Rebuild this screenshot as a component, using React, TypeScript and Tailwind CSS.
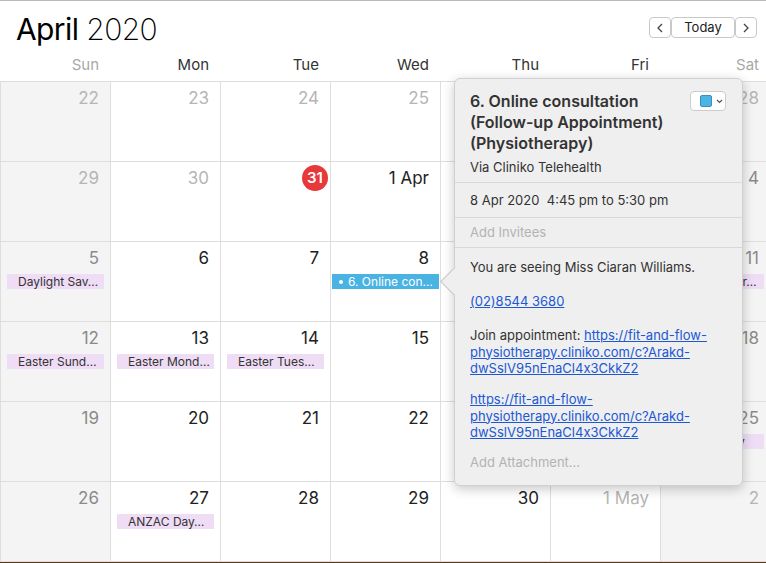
import React from 'react'

type Tone = 'muted' | 'weekend' | 'normal' | 'today' | 'hidden'
type Ev = { text: string; kind: 'holiday' | 'appt' }
type Day = { label: string; tone: Tone; event?: Ev }

const dayNames = ['Sun', 'Mon', 'Tue', 'Wed', 'Thu', 'Fri', 'Sat']

const d = (label: string, tone: Tone, event?: Ev): Day => ({ label, tone, event })

// cells under the popover keep no visible label
const weeks: Day[][] = [
  [d('22', 'muted'), d('23', 'muted'), d('24', 'muted'), d('25', 'muted'), d('', 'hidden'), d('', 'hidden'), d('28', 'muted')],
  [d('29', 'muted'), d('30', 'muted'), d('31', 'today'), d('1 Apr', 'normal'), d('', 'hidden'), d('', 'hidden'), d('4', 'weekend')],
  [
    d('5', 'weekend', { text: 'Daylight Sav…', kind: 'holiday' }),
    d('6', 'normal'),
    d('7', 'normal'),
    d('8', 'normal', { text: '6. Online con…', kind: 'appt' }),
    d('', 'hidden'),
    d('', 'hidden'),
    d('11', 'weekend', { text: 'Easter Satur…', kind: 'holiday' }),
  ],
  [
    d('12', 'weekend', { text: 'Easter Sund…', kind: 'holiday' }),
    d('13', 'normal', { text: 'Easter Mond…', kind: 'holiday' }),
    d('14', 'normal', { text: 'Easter Tues…', kind: 'holiday' }),
    d('15', 'normal'),
    d('', 'hidden'),
    d('', 'hidden'),
    d('18', 'weekend'),
  ],
  [
    d('19', 'weekend'),
    d('20', 'normal'),
    d('21', 'normal'),
    d('22', 'normal'),
    d('', 'hidden'),
    d('', 'hidden'),
    d('25', 'weekend', { text: 'ANZAC Day', kind: 'holiday' }),
  ],
  [
    d('26', 'weekend'),
    d('27', 'normal', { text: 'ANZAC Day…', kind: 'holiday' }),
    d('28', 'normal'),
    d('29', 'normal'),
    d('30', 'normal'),
    d('1 May', 'muted'),
    d('2', 'muted'),
  ],
]

const toneClass: Record<Tone, string> = {
  muted: 'text-[#b5b5b5]',
  weekend: 'text-[#8a8a8a]',
  normal: 'text-[#222]',
  today: 'text-white',
  hidden: 'text-transparent',
}

function Cell({ day, col }: { day: Day; col: number }) {
  const weekend = col === 0 || col === 6
  return (
    <div className={`h-[80px] border-t border-l border-[#dedede] flex flex-col pt-[5px] ${weekend ? 'bg-[#f4f4f4]' : 'bg-white'}`}>
      {day.tone === 'today' ? (
        <div className="flex justify-end pr-[2px] h-[22px]">
          <div className="w-[26px] h-[26px] -mt-[2px] rounded-full bg-[#e8393a] flex items-center justify-center text-white text-[15px] font-semibold">
            {day.label}
          </div>
        </div>
      ) : (
        <div className={`text-right pr-[11px] text-[17px] leading-[22px] h-[22px] ${toneClass[day.tone]}`}>{day.label}</div>
      )}
      {day.event && day.event.kind === 'holiday' && (
        <div className="mt-[5px] ml-[6px] w-[97px] h-[15px] bg-[#efdcf5] text-[12px] leading-[15px] text-[#333] pl-[11px] whitespace-nowrap overflow-hidden">
          {day.event.text}
        </div>
      )}
      {day.event && day.event.kind === 'appt' && (
        <div className="mt-[5px] ml-[1px] w-[107px] h-[15px] bg-[#49b3e3] text-[12px] leading-[15px] text-white pl-[7px] whitespace-nowrap overflow-hidden flex items-center">
          <span className="w-[4px] h-[4px] rounded-full bg-white mr-[5px]" />
          {day.event.text}
        </div>
      )}
    </div>
  )
}

function Chevron({ dir }: { dir: 'left' | 'right' }) {
  return (
    <svg width="6" height="10" viewBox="0 0 6 10" fill="none" stroke="#444" strokeWidth="1.3">
      {dir === 'left' ? <polyline points="5,1 1,5 5,9" /> : <polyline points="1,1 5,5 1,9" />}
    </svg>
  )
}

function Popover() {
  return (
    <div className="absolute left-[454px] top-[78px] w-[289px] h-[408px] bg-[#efefef] rounded-[6px] border border-[#d0d0d0] shadow-[0_3px_12px_rgba(0,0,0,0.22)] z-10">
      <div className="absolute -left-[11px] top-[193px] w-[19px] h-[19px] rotate-45 bg-[#efefef] border-l border-b border-[#c8c8c8]" />
      <div className="relative">
        <div className="px-[15px] pt-[12px] pb-[6px] border-b border-[#d8d8d8]">
          <div className="text-[16px] leading-[21px] font-semibold text-[#333]">
            6. Online consultation
            <br />
            (Follow-up Appointment)
            <br />
            (Physiotherapy)
          </div>
          <div className="mt-[5px] text-[13px] leading-[17px] text-[#333]">Via Cliniko Telehealth</div>
          <div className="absolute right-[16px] top-[12px] w-[36px] h-[20px] bg-white border border-[#cdcdcd] rounded-[4px] flex items-center pl-[9px] gap-[4px]">
            <span className="w-[12px] h-[12px] bg-[#4bb4e2] border border-[#3a8fc0] rounded-[2px]" />
            <svg width="7" height="5" viewBox="0 0 7 5" fill="none" stroke="#555" strokeWidth="1.2">
              <polyline points="1,1 3.5,3.5 6,1" />
            </svg>
          </div>
        </div>
        <div className="h-[35px] px-[15px] pt-[1px] flex items-center border-b border-[#d8d8d8] text-[13px] text-[#333] whitespace-pre">
          {'8 Apr 2020  4:45 pm to 5:30 pm'}
        </div>
        <div className="h-[30px] px-[15px] pt-[1px] flex items-center border-b border-[#d8d8d8] text-[13px] text-[#b3b3b3]">
          Add Invitees
        </div>
        <div className="px-[15px] pt-[11px] text-[13px] leading-[16.5px] text-[#333] [font-feature-settings:'calt'_0]">
          <p>You are seeing Miss Ciaran Williams.</p>
          <p className="mt-[17.5px]">
            <a className="text-[#2058d4] underline">(02)8544 3680</a>
          </p>
          <p className="mt-[17.5px]">
            Join appointment:{' '}
            <a className="text-[#2058d4] underline">
              https://fit-and-flow-
              <br />
              physiotherapy.cliniko.com/c?Arakd-
              <br />
              dwSslV95nEnaCl4x3CkkZ2
            </a>
          </p>
          <p className="mt-[14.5px]">
            <a className="text-[#2058d4] underline">
              https://fit-and-flow-
              <br />
              physiotherapy.cliniko.com/c?Arakd-
              <br />
              dwSslV95nEnaCl4x3CkkZ2
            </a>
          </p>
          <p className="mt-[13.5px] text-[#b3b3b3]">Add Attachment…</p>
        </div>
      </div>
    </div>
  )
}

export default function App() {
  return (
    <div
      className="relative w-[766px] h-[563px] overflow-hidden bg-white"
      style={{ fontFamily: 'Inter, "Noto Sans", sans-serif' }}
    >
      <div className="h-[81px] border-t border-[#b9b9b9] flex flex-col">
        <div className="h-[52px] flex items-start justify-between pl-[16px] pr-[9px]">
          <div className="pt-[9px] text-[30px] leading-[38px] text-black tracking-[-0.6px]">
            <span className="font-normal">April</span> <span className="font-extralight">2020</span>
          </div>
          <div className="mt-[16px] flex h-[21px]">
            <div className="w-[22px] h-[21px] bg-white border border-[#c8c8c8] rounded-[4px] flex items-center justify-center">
              <Chevron dir="left" />
            </div>
            <div className="w-[64px] h-[21px] bg-white border border-[#c8c8c8] rounded-[4px] flex items-center justify-center text-[13px] text-[#222]">
              Today
            </div>
            <div className="w-[22px] h-[21px] bg-white border border-[#c8c8c8] rounded-[4px] flex items-center justify-center">
              <Chevron dir="right" />
            </div>
          </div>
        </div>
        <div className="grid grid-cols-[repeat(7,110px)] h-[28px] pt-[2px]">
          {dayNames.map((n, i) => (
            <div
              key={n}
              className={`text-right pr-[11px] text-[15px] leading-[20px] ${i === 0 || i === 6 ? 'text-[#a8a8a8]' : 'text-[#333]'}`}
            >
              {n}
            </div>
          ))}
        </div>
      </div>
      <div className="grid grid-cols-[repeat(7,110px)] border-b border-[#dedede]">
        {weeks.map((w, r) =>
          w.map((day, c) => <Cell key={`${r}-${c}`} day={day} col={c} />)
        )}
      </div>
      <div className="h-[2px] bg-[#5b3a1c]" />
      <Popover />
    </div>
  )
}
